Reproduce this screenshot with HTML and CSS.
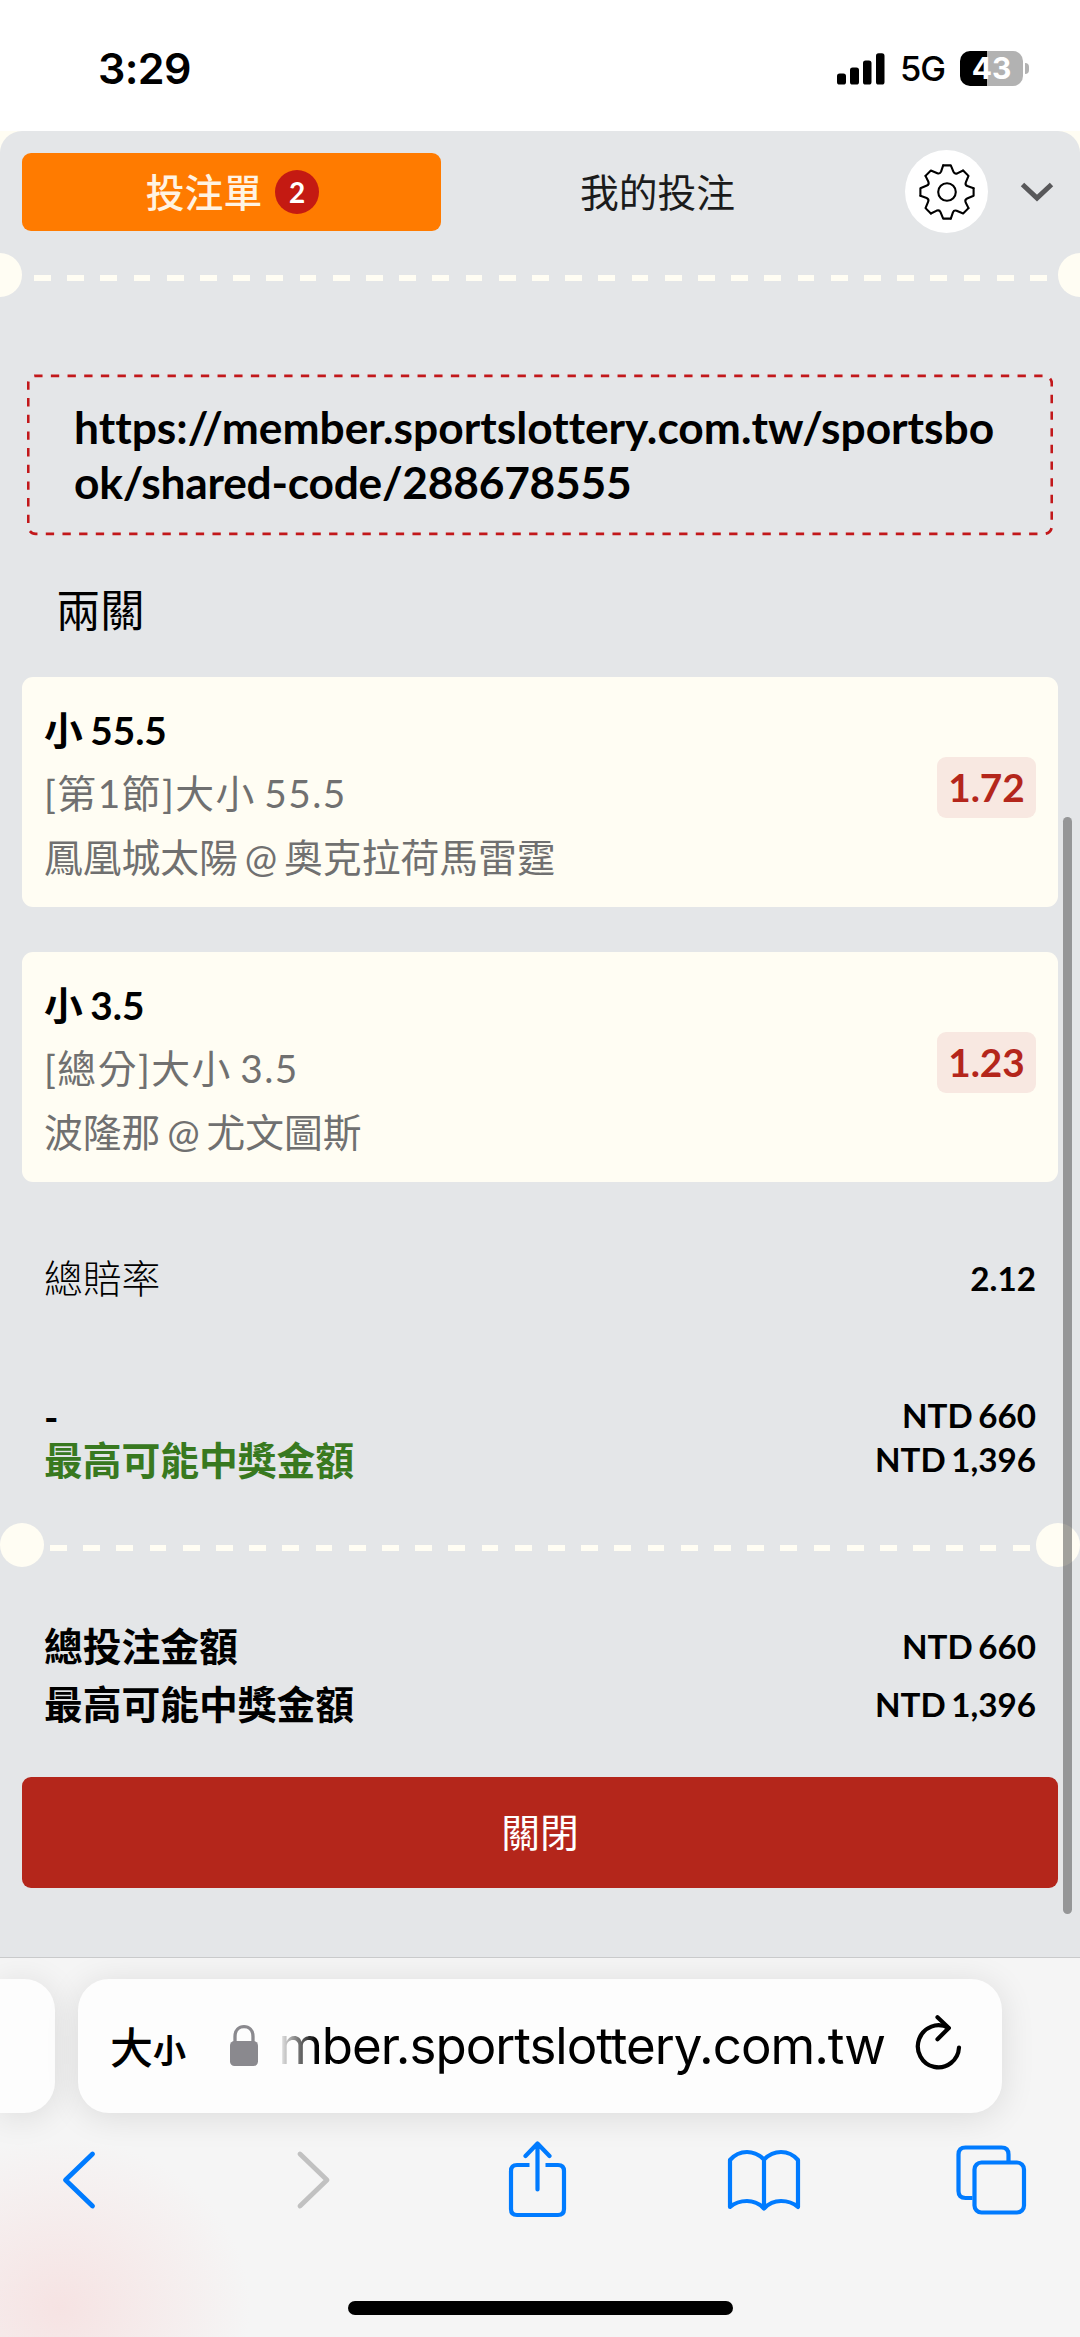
FILE: index.html
```html
<!DOCTYPE html>
<html lang="zh-Hant">
<head>
<meta charset="utf-8">
<title>投注單</title>
<link rel="stylesheet" href="styles.css">
</head>
<body>
<header class="status">
  <span class="time">3:29</span>
  <div class="status-right">
    <svg class="signal" width="48" height="32" viewBox="0 0 48 32"><rect x="0" y="20.5" width="9" height="11" rx="2.6"/><rect x="13" y="14.5" width="9" height="17" rx="2.6"/><rect x="26" y="7.5" width="8.5" height="24" rx="2.6"/><rect x="39" y="0.3" width="8.5" height="31.2" rx="2.6"/></svg>
    <span class="network">5G</span>
    <span class="battery">43</span>
    <span class="nub"></span>
  </div>
</header>

<div class="backdrop">
<main class="sheet">
  <nav class="tabs">
    <div class="tab active"><span class="label">投注單</span><span class="count">2</span></div>
    <div class="tab"><span class="label">我的投注</span></div>
    <div class="gear">
      <svg width="60" height="60" viewBox="-30 -30 60 60" fill="none" stroke="#000" stroke-width="2.1" stroke-linejoin="round" stroke-linecap="round">
        <defs><path id="tooth" d="M-3.8 -26.6H3.8L6.5 -20.1Q7.6 -17.6 10.2 -18.6L16.1 -21.5"/></defs>
        <use href="#tooth"/><use href="#tooth" transform="rotate(45)"/><use href="#tooth" transform="rotate(90)"/><use href="#tooth" transform="rotate(135)"/><use href="#tooth" transform="rotate(180)"/><use href="#tooth" transform="rotate(225)"/><use href="#tooth" transform="rotate(270)"/><use href="#tooth" transform="rotate(315)"/>
        <circle r="8.8"/>
      </svg>
    </div>
    <svg class="collapse" width="34" height="20" viewBox="0 0 34 20" fill="none" stroke="#58585a" stroke-width="5"><path d="M2.5 2.5L17 16L31.5 2.5"/></svg>
  </nav>

  <div class="divider clipped"><i></i><i></i></div>

  <div class="share">
    <svg class="share-frame" width="1026" height="162" viewBox="0 0 1026 162"><rect x="1.2" y="1.8" width="1023.6" height="158" rx="7.5" fill="none" stroke="#c2181b" stroke-width="2.7" pathLength="2350.47" stroke-dasharray="8.335 8.335" stroke-dashoffset="1.5"/></svg>
    https:<span class="slash">/</span>/member.sportslottery.com.tw/sportsbo<span class="tail">ok/shared-code/288678555</span>
  </div>

  <h2 class="parlay">兩關</h2>

  <section class="bets">
    <article class="bet">
      <div class="info">
        <strong>小 55.5</strong>
        <span class="market">[第1節]大小 55.5</span>
        <span>鳳凰城太陽 @ 奧克拉荷馬雷霆</span>
      </div>
      <b class="odds">1.72</b>
    </article>
    <article class="bet">
      <div class="info">
        <strong>小 3.5</strong>
        <span class="market">[總分]大小 3.5</span>
        <span>波隆那 @ 尤文圖斯</span>
      </div>
      <b class="odds">1.23</b>
    </article>
  </section>

  <div class="row total-odds"><span>總賠率</span><b>2.12</b></div>
  <div class="stake">
    <div class="row"><strong class="dash">-</strong><b>NTD 660</b></div>
    <div class="row"><strong class="win">最高可能中獎金額</strong><b>NTD 1,396</b></div>
  </div>

  <div class="divider"><i></i><i></i></div>

  <div class="summary">
    <div class="row"><strong>總投注金額</strong><b>NTD 660</b></div>
    <div class="row"><strong>最高可能中獎金額</strong><b>NTD 1,396</b></div>
  </div>
  <button class="close">關閉</button>
  <div class="scrollbar"></div>
</main>
</div>

<footer class="browser">
  <div class="address-row">
    <div class="pill previous"></div>
    <div class="pill address">
      <span class="size-big">大</span><span class="size-small">小</span>
      <svg class="lock" width="28" height="41" viewBox="0 0 28 41"><rect y="16" width="28" height="25" rx="4.5" fill="#8a898e"/><path d="M5 18V11.5C5 5 9 1.7 14 1.7S23 5 23 11.5V18" fill="none" stroke="#8a898e" stroke-width="3.3"/></svg>
      <span class="host"><span>mber.sportslottery.com.tw</span></span>
      <svg class="reload" width="48" height="58" viewBox="0 0 48 58" fill="none" stroke="#000" stroke-width="4.2" stroke-linecap="round" stroke-linejoin="round"><path d="M44 33.5A20.6 21 0 1 1 33.5 14"/><path d="M22.5 3.3L33.8 14L22.5 25.2"/></svg>
    </div>
  </div>
  <div class="toolbar">
    <svg width="36" height="60" viewBox="0 0 36 60" fill="none" stroke="#007bff" stroke-width="4.8" stroke-linecap="round" stroke-linejoin="round"><path d="M31.5 4L4.5 30L31.5 56"/></svg>
    <svg width="36" height="60" viewBox="0 0 36 60" fill="none" stroke="#c1c1c1" stroke-width="4.8" stroke-linecap="round" stroke-linejoin="round"><path d="M4 4L31 30L4 56"/></svg>
    <svg width="60" height="78" viewBox="0 0 60 78" fill="none" stroke="#007bff" stroke-width="4.2" stroke-linecap="round" stroke-linejoin="round"><path d="M21.5 24H9Q3 24 3 30V68Q3 74 9 74H50Q56 74 56 68V30Q56 24 50 24H37.5" stroke-linecap="butt"/><path d="M29.5 48.5V3M17.5 15L29.5 2.5L41.5 15"/></svg>
    <svg width="74" height="64" viewBox="0 0 74 64" fill="none" stroke="#007bff" stroke-width="4.2" stroke-linecap="round" stroke-linejoin="round"><path d="M37 11.5Q29.5 4 20 4Q10 4 3 12V59Q10 53 20 53Q30 53 37 60.5Q44 53 54 53Q64 53 71 59V12Q64 4 54 4Q44.5 4 37 11.5V60"/></svg>
    <svg width="73" height="70" viewBox="0 0 73 70" fill="none" stroke="#007bff" stroke-width="4.2"><path d="M18.5 53H11.5Q4.5 53 4.5 46V9.5Q4.5 2.5 11.5 2.5H47.5Q54.5 2.5 54.5 9.5V17"/><rect x="20.5" y="17.5" width="49.5" height="50" rx="7"/></svg>
  </div>
  <div class="home"></div>
</footer>
</body>
</html>
```
FILE: styles.css
```css
* { box-sizing: border-box; }

body {
  margin: 0;
  width: 1080px;
  height: 2337px;
  display: flex;
  flex-direction: column;
  overflow: hidden;
  background: #fff;
  color: #000;
  font-family: Lato, "Noto Sans CJK TC", sans-serif;
  font-size: 38.77px;
  font-variant-ligatures: none;
}

svg { display: block; flex: none; }

/* status bar */
.status {
  height: 131px;
  flex: none;
  display: flex;
  justify-content: space-between;
  padding: 0 51px 0 98px;
  font-family: Inter, sans-serif;
}
.time { font-size: 43px; font-weight: 600; line-height: 137px; letter-spacing: -0.6px; }
.status-right { display: flex; align-items: center; height: 137px; }
.network { margin-left: 15px; width: 45px; font-size: 34.5px; font-weight: 500; letter-spacing: -1px; }
.battery {
  margin-left: 15px;
  width: 63px;
  height: 35px;
  border-radius: 10px;
  background: linear-gradient(90deg, #000 27px, #b2b2b2 27px);
  color: #fff;
  font-size: 30px;
  font-weight: 700;
  line-height: 35px;
  text-align: center;
}
.nub { margin-left: 2px; width: 4px; height: 11px; border-radius: 0 5px 5px 0; background: #b2b2b2; }

/* bet slip */
.backdrop { height: 1826px; flex: none; background: #fffdf3; }
.sheet {
  position: relative;
  height: 100%;
  border-radius: 22px 22px 0 0;
  background: #e4e6e8;
  overflow: hidden;
}
.tabs { height: 102px; margin-bottom: 20px; padding: 19px 26px 0 22px; display: flex; align-items: center; }
.tab {
  width: 419px;
  height: 78px;
  flex: none;
  border-radius: 9px;
  display: flex;
  align-items: center;
  justify-content: center;
  gap: 13px;
  color: #1b1b1b;
}
.tab + .tab { width: 433px; }
.label { padding-bottom: 4px; }
.active { padding-left: 2px; background: #ff7b00; color: #fff3e2; font-weight: 500; }
.count {
  width: 44px;
  height: 44px;
  border-radius: 50%;
  background: #c41a12;
  color: #fff;
  font: 700 28px/44px Lato, sans-serif;
  text-align: center;
}
.gear {
  width: 83px;
  height: 83px;
  flex: none;
  margin-left: 31px;
  border-radius: 50%;
  background: #fff;
  display: flex;
  align-items: center;
  justify-content: center;
}
.collapse { margin-left: 32px; }

.divider {
  height: 44px;
  display: flex;
  justify-content: space-between;
  background: repeating-linear-gradient(90deg, #fffdf3 0 16.8px, transparent 16.8px 33.2px) 50px 22px / 980px 6px no-repeat;
}
.divider i { width: 44px; height: 44px; border-radius: 50%; background: #fffdf3; }
.clipped { margin: 0 -22px; background-position: 55.5px 22px; background-size: 1014px 6px; }

.share {
  position: relative;
  width: 1026px;
  height: 162px;
  margin: 77px 0 0 27px;
  padding: 25px 45px 0 47px;
  font-size: 44.3px;
  font-weight: 700;
  line-height: 55.4px;
  word-break: break-all;
}
.share-frame { position: absolute; left: 0; top: 0; }
.slash { letter-spacing: -6px; }
.tail { letter-spacing: -0.24px; }

.parlay { margin: 0; height: 140.5px; padding-left: 56px; font-size: 44.3px; font-weight: 400; line-height: 148px; }

.bets { display: flex; flex-direction: column; gap: 44.5px; padding: 0 22px; }
.bet {
  height: 230.5px;
  padding: 0 22px;
  display: flex;
  align-items: center;
  justify-content: space-between;
  border-radius: 11px;
  background: #fffdf3;
}
.info { display: flex; flex-direction: column; padding-top: 5px; color: #707070; line-height: 63.8px; word-spacing: -3px; }
.info strong { color: #000; font-weight: 700; word-spacing: -2px; }
.market { letter-spacing: 1.5px; }
.odds {
  width: 99px;
  height: 61px;
  margin-top: -9px;
  border-radius: 9px;
  background: #f8e8e1;
  color: #b4261b;
  line-height: 61px;
  text-align: center;
}

.row { display: flex; justify-content: space-between; padding: 0 44px; height: 44px; line-height: 44px; }
.row b { font-size: 33.2px; font-weight: 700; word-spacing: -2.5px; }
.row strong { font-weight: 700; }
.total-odds { margin-top: 74px; font-weight: 300; }
.stake { margin-top: 93px; }
.stake .win { line-height: 47px; color: #38791f; }
.stake .dash { line-height: 48px; }

.stake + .divider { margin-top: 42px; }

.summary { margin-top: 50px; }
.summary .row { height: 58px; line-height: 58px; }

.close {
  display: block;
  width: 1036px;
  height: 111px;
  margin: 43.5px 22px 0;
  padding: 0 0 4px;
  border: 0;
  border-radius: 9px;
  background: #b4261b;
  color: #fff;
  font: inherit;
}
.scrollbar { position: absolute; left: 1063px; top: 686px; width: 8.5px; height: 1097px; border-radius: 4.5px; background: rgba(70, 70, 70, 0.5); }

/* browser chrome */
.browser {
  height: 380px;
  flex: none;
  overflow: hidden;
  border-top: 1px solid #c9cacb;
  background: radial-gradient(ellipse 190px 170px at 60px 350px, #f6e3e3, #f6e3e300), #f5f5f5;
}
.address-row { display: flex; gap: 23px; margin-top: 21px; }
.pill { height: 134px; background: #fdfdfd; box-shadow: 0 4px 34px rgba(0, 0, 0, 0.11); }
.previous { width: 55px; border-radius: 0 31px 31px 0; }
.address { width: 924px; border-radius: 31px; display: flex; align-items: center; font-family: Inter, "Noto Sans CJK TC", sans-serif; }
.size-big { margin: -2px 0 0 32px; font-size: 43px; font-weight: 500; }
.size-small { width: 33px; font-size: 33px; font-weight: 700; margin-top: 6px; }
.lock { margin-left: 44px; margin-top: -1px; }
.host {
  margin-left: 19px;
  margin-top: -2px;
  width: 608px;
  display: flex;
  justify-content: flex-end;
  overflow: hidden;
  font-size: 51px;
  letter-spacing: -1px;
  -webkit-mask-image: linear-gradient(90deg, transparent, #000 40px);
  mask-image: linear-gradient(90deg, transparent, #000 40px);
}
.reload { margin-left: 30px; margin-top: -6px; }

.toolbar { display: flex; align-items: center; margin-top: 28px; height: 78px; padding-left: 61px; }
.toolbar svg:nth-child(2) { margin-left: 199px; }
.toolbar svg:nth-child(3) { margin-left: 176px; }
.toolbar svg:nth-child(4) { margin-left: 159px; }
.toolbar svg:nth-child(5) { margin-left: 153px; }

.home { width: 385px; height: 14px; margin: 82px 0 0 348px; border-radius: 7px; background: #000; }
```
